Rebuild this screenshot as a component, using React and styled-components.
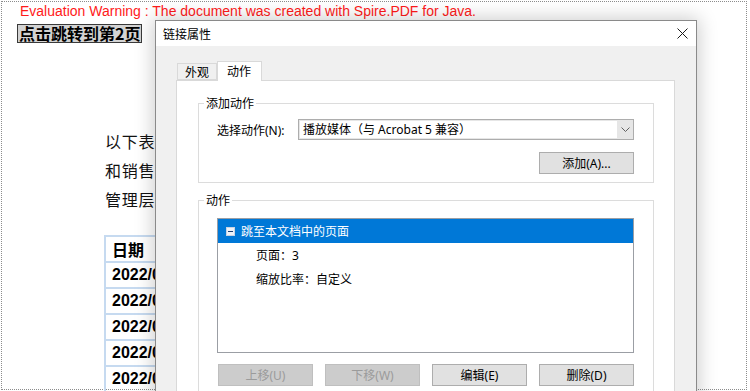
import React from "react";
import styled, { createGlobalStyle } from "styled-components";

const GlobalStyle = createGlobalStyle`
  html, body {
    margin: 0;
    padding: 0;
    background: #fff;
  }
  body {
    font-family: "Noto Sans", "Noto Sans CJK SC", sans-serif;
  }
`;

const Screen = styled.div`
  position: relative;
  width: 750px;
  height: 391px;
  overflow: hidden;
  padding: 1px 0 0 1px;
  box-sizing: border-box;
`;

const Sheet = styled.div`
  width: 746px;
  height: 389px;
  box-sizing: border-box;
  border: 1px dotted #8c8c8c;
  padding: 1px 0 0 18px;
`;

const Warning = styled.div`
  font-family: "Liberation Sans", Arial, sans-serif;
  font-size: 14px;
  line-height: 16px;
  color: #ff1a1a;
`;

const LinkButton = styled.div`
  display: inline-block;
  margin: 5px 0 0 -3px;
  padding: 0 1px;
  border: 1px solid #3a3a3a;
  background: #d3d3d3;
  font-family: "Noto Sans CJK SC", sans-serif;
  font-weight: 700;
  font-size: 16px;
  line-height: 17px;
  color: #000;
`;

/* the part of the page that is not covered by the dialog */
const DocColumn = styled.div`
  width: 136px;
  overflow: hidden;
`;

const Paragraph = styled.div`
  margin: 82px 0 0 85px;
  font-family: "Noto Sans CJK SC", sans-serif;
  font-size: 16px;
  line-height: 29px;
  letter-spacing: 0.8px;
  color: #111;
  white-space: nowrap;
`;

const Table = styled.table`
  margin: 21px 0 0 84px;
  border-collapse: collapse;
  font-family: "Liberation Sans", "Noto Sans CJK SC", sans-serif;
  font-weight: 700;
  font-size: 16px;
  color: #000;
`;

const Cell = styled.td`
  border: 2px solid #c6daf0;
  height: ${(p) => (p.$head ? 23 : 24)}px;
  padding: 0 10px 0 6px;
  white-space: nowrap;
`;

const Dialog = styled.div`
  position: absolute;
  left: 155px;
  top: 20px;
  width: 542px;
  height: 400px;
  box-sizing: border-box;
  border: 1px solid #8a8a8a;
  background: #f0f0f0;
  box-shadow: 0 0 18px 2px rgba(0, 0, 0, 0.2);
  display: flex;
  flex-direction: column;
  font-size: 12px;
  color: #000;
`;

const TitleBar = styled.div`
  height: 25px;
  background: #fff;
  display: flex;
  align-items: center;
  justify-content: space-between;
  padding: 0 8px 0 7px;
`;

const Title = styled.span`
  font-family: "Noto Sans CJK SC", sans-serif;
  font-size: 12px;
`;

const Body = styled.div`
  flex: 1;
  padding: 15px 21px 0 20px;
  display: flex;
  flex-direction: column;
`;

const TabStrip = styled.div`
  display: flex;
  align-items: flex-end;
  padding-left: 1px;
`;

const Tab = styled.div`
  position: relative;
  box-sizing: border-box;
  height: ${(p) => (p.$active ? 20 : 17)}px;
  padding: 0 ${(p) => (p.$active ? 10 : 7)}px 0 ${(p) => (p.$active ? 9 : 7)}px;
  border: 1px solid #d9d9d9;
  border-bottom: ${(p) => (p.$active ? "none" : "1px solid #d9d9d9")};
  margin-bottom: ${(p) => (p.$active ? -1 : 0)}px;
  background: ${(p) => (p.$active ? "#fff" : "#f0f0f0")};
  line-height: ${(p) => (p.$active ? 18 : 16)}px;
  z-index: ${(p) => (p.$active ? 1 : 0)};
  font-family: "Noto Sans CJK SC", sans-serif;
`;

const Panel = styled.div`
  flex: 1;
  background: #fff;
  border: 1px solid #d9d9d9;
  padding: 0 20px 0 21px;
`;

const Group = styled.div`
  position: relative;
  margin-top: ${(p) => p.$top}px;
  border: 1px solid #dcdcdc;
  padding: ${(p) => p.$pad};
`;

const Legend = styled.span`
  position: absolute;
  top: -9px;
  left: 5px;
  padding: 0 2px;
  background: #fff;
  line-height: 16px;
  font-family: "Noto Sans CJK SC", sans-serif;
`;

const FieldRow = styled.div`
  display: flex;
  align-items: center;
`;

const Label = styled.span`
  width: 81px;
  white-space: nowrap;
`;

const Combo = styled.div`
  flex: 1;
  height: 21px;
  box-sizing: border-box;
  border: 1px solid #adadad;
  background: #e6e6e6;
  padding: 1px 0 1px 1px;
  display: flex;
`;

const ComboText = styled.div`
  flex: 1;
  background: #fff;
  line-height: 17px;
  padding-left: 3px;
  white-space: nowrap;
`;

const ComboArrow = styled.div`
  width: 16px;
  display: flex;
  align-items: center;
  justify-content: center;
`;

const RightRow = styled.div`
  display: flex;
  justify-content: flex-end;
  margin-top: 12px;
`;

const Button = styled.div`
  width: 95px;
  height: 22px;
  box-sizing: border-box;
  border: 1px solid ${(p) => (p.$disabled ? "#bfbfbf" : "#adadad")};
  background: ${(p) => (p.$disabled ? "#cccccc" : "#e1e1e1")};
  color: ${(p) => (p.$disabled ? "#9b9b9b" : "#000")};
  display: flex;
  align-items: center;
  justify-content: center;
  white-space: nowrap;
`;

const ListBox = styled.div`
  height: 135px;
  box-sizing: border-box;
  border: 1px solid #9b9ea4;
  background: #fff;
`;

const Row = styled.div`
  height: 24px;
  display: flex;
  align-items: center;
  padding-left: ${(p) => (p.$child ? 38 : 8)}px;
  background: ${(p) => (p.$selected ? "#0078d7" : "transparent")};
  color: ${(p) => (p.$selected ? "#fff" : "#000")};
  gap: 6px;
  white-space: nowrap;
`;

const ButtonRow = styled.div`
  display: flex;
  gap: 12px;
  margin: 11px 0 0 1px;
`;

function Expander() {
  return (
    <svg width="9" height="9" viewBox="0 0 9 9">
      <rect x="0.5" y="0.5" width="8" height="8" fill="#eef2f8" stroke="#c8d3e3" />
      <line x1="2" y1="4.5" x2="7" y2="4.5" stroke="#1d3f72" strokeWidth="1" />
    </svg>
  );
}

const rows = ["2022/01", "2022/02", "2022/03", "2022/04", "2022/05"];

export default function App() {
  return (
    <Screen>
      <GlobalStyle />
      <Sheet>
        <Warning>Evaluation Warning : The document was created with Spire.PDF for Java.</Warning>
        <LinkButton>点击跳转到第2页</LinkButton>
        <DocColumn>
          <Paragraph>
            以下表格
            <br />
            和销售人
            <br />
            管理层了
          </Paragraph>
          <Table>
            <tbody>
              <tr>
                <Cell $head>日期</Cell>
              </tr>
              {rows.map((d) => (
                <tr key={d}>
                  <Cell>{d}</Cell>
                </tr>
              ))}
            </tbody>
          </Table>
        </DocColumn>
      </Sheet>

      <Dialog>
        <TitleBar>
          <Title>链接属性</Title>
          <svg width="11" height="11" viewBox="0 0 11 11">
            <path d="M0.5 0.5 L10.5 10.5 M10.5 0.5 L0.5 10.5" stroke="#1a1a1a" strokeWidth="1" />
          </svg>
        </TitleBar>
        <Body>
          <TabStrip>
            <Tab>外观</Tab>
            <Tab $active>动作</Tab>
          </TabStrip>
          <Panel>
            <Group $top={22} $pad="15px 19px 8px 18px">
              <Legend>添加动作</Legend>
              <FieldRow>
                <Label>选择动作(N):</Label>
                <Combo>
                  <ComboText>播放媒体（与 Acrobat 5 兼容）</ComboText>
                  <ComboArrow>
                    <svg width="9" height="5" viewBox="0 0 9 5">
                      <path d="M0.5 0.5 L4.5 4.5 L8.5 0.5" fill="none" stroke="#606060" strokeWidth="1" />
                    </svg>
                  </ComboArrow>
                </Combo>
              </FieldRow>
              <RightRow>
                <Button>添加(A)...</Button>
              </RightRow>
            </Group>
            <Group $top={17} $pad="17px 19px 20px 18px">
              <Legend>动作</Legend>
              <ListBox>
                <Row $selected>
                  <Expander />
                  跳至本文档中的页面
                </Row>
                <Row $child>页面：3</Row>
                <Row $child>缩放比率：自定义</Row>
              </ListBox>
              <ButtonRow>
                <Button $disabled>上移(U)</Button>
                <Button $disabled>下移(W)</Button>
                <Button>编辑(E)</Button>
                <Button>删除(D)</Button>
              </ButtonRow>
            </Group>
          </Panel>
        </Body>
      </Dialog>
    </Screen>
  );
}
